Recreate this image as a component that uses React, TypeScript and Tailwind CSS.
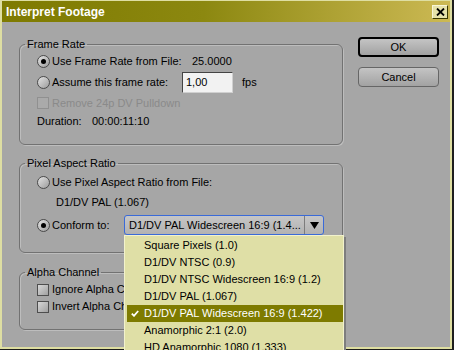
import React from "react";

const items = [
  "Square Pixels (1.0)",
  "D1/DV NTSC (0.9)",
  "D1/DV NTSC Widescreen 16:9 (1.2)",
  "D1/DV PAL (1.067)",
  "D1/DV PAL Widescreen 16:9 (1.422)",
  "Anamorphic 2:1 (2.0)",
  "HD Anamorphic 1080 (1.333)",
];
const selectedIndex = 4;

function Radio({ checked }: { checked?: boolean }) {
  return (
    <span className="w-[13px] h-[13px] shrink-0 rounded-full border border-[#4a4a4a] bg-[linear-gradient(135deg,#e4e4e4,#9c9c9c)] flex items-center justify-center">
      {checked && <span className="w-[5px] h-[5px] rounded-full bg-black" />}
    </span>
  );
}

function Checkbox({ disabled }: { disabled?: boolean }) {
  return (
    <span
      className={
        disabled
          ? "w-[12px] h-[12px] shrink-0 border border-[#909090] bg-[#aaaaaa]"
          : "w-[12px] h-[12px] shrink-0 border border-[#4e4e4e] bg-[linear-gradient(135deg,#d8d8d8,#a0a0a0)]"
      }
    />
  );
}

function Group({ title, className, children }: { title: string; className?: string; children: React.ReactNode }) {
  return (
    <fieldset
      className={
        "border border-[#727272] rounded-[6px] shadow-[inset_1px_1px_0_#bdbdbd,1px_1px_0_#bdbdbd] " +
        (className ?? "")
      }
    >
      <legend className="ml-[5px] px-[2px] leading-[14px] h-[14px]">{title}</legend>
      <div className="pl-[17px]">{children}</div>
    </fieldset>
  );
}

function Button({ label, primary }: { label: string; primary?: boolean }) {
  return (
    <button
      className={
        "w-[81px] h-[20px] rounded-[4px] flex items-center justify-center text-black bg-[linear-gradient(#c4c4c4,#a2a2a2)] " +
        (primary ? "border-2 border-black" : "border border-[#666666]")
      }
    >
      {label}
    </button>
  );
}

export default function App() {
  return (
    <div className="w-[454px] h-[350px] overflow-hidden bg-[#1e1e1e] pr-[2px] pb-[1px] font-['Liberation_Sans',Arial,sans-serif] text-[11px] text-black select-none">
      <div className="h-full flex flex-col border-l-[2px] border-t border-r-[2px] border-b-[2px] border-[#dedea2] bg-[#a6a6a6]">
        {/* title bar */}
        <div className="h-[21px] shrink-0 flex items-center pl-[4px] pr-[2px] bg-[linear-gradient(to_right,#7e7a00,#8c8810_45%,#ccb954)]">
          <span className="text-white font-bold text-[12px]">Interpret Footage</span>
          <button className="ml-auto w-[16px] h-[14px] flex items-center justify-center bg-[#e6e2aa] border border-t-[#f8f6d8] border-l-[#f8f6d8] border-r-[#3a3800] border-b-[#3a3800]">
            <svg width="9" height="8" viewBox="0 0 9 8">
              <path d="M1 0.5 L8 7.5 M8 0.5 L1 7.5" stroke="#000" strokeWidth="1.8" />
            </svg>
          </button>
        </div>

        {/* body */}
        <div className="flex-1 flex pl-[17px] pt-[15px] gap-[15px]">
          <div className="w-[324px] shrink-0 flex flex-col">
            <Group title="Frame Rate" className="pb-[18px]">
              <div className="h-[21px] grid grid-cols-[155px_auto] items-center">
                <span className="flex items-center gap-[2px]">
                  <Radio checked />
                  <span>Use Frame Rate from File:</span>
                </span>
                <span>25.0000</span>
              </div>
              <div className="h-[21px] grid grid-cols-[145px_51px_auto] items-center">
                <span className="flex items-center gap-[2px]">
                  <Radio />
                  <span>Assume this frame rate:</span>
                </span>
                <span className="h-[21px] flex items-center pl-[3px] bg-[#f2f2f2] border border-t-[#444444] border-l-[#444444] border-r-[#d0d0d0] border-b-[#d0d0d0]">
                  1,00
                </span>
                <span className="pl-[9px]">fps</span>
              </div>
              <div className="h-[20px] flex items-center gap-[3px] text-[#8a8a8a]">
                <Checkbox disabled />
                <span>Remove 24p DV Pulldown</span>
              </div>
              <div className="h-[13px] grid grid-cols-[55px_auto] items-center">
                <span>Duration:</span>
                <span>00:00:11:10</span>
              </div>
            </Group>

            <Group title="Pixel Aspect Ratio" className="mt-[11px] pb-[17px]">
              <div className="h-[24px] flex items-center gap-[2px]">
                <Radio />
                <span>Use Pixel Aspect Ratio from File:</span>
              </div>
              <div className="h-[16px] flex items-center pl-[19px]">D1/DV PAL (1.067)</div>
              <div className="mt-[5px] h-[20px] grid grid-cols-[87px_200px] items-center">
                <span className="flex items-center gap-[2px]">
                  <Radio checked />
                  <span>Conform to:</span>
                </span>
                <div className="relative h-[20px]">
                  <div className="h-full flex items-stretch border border-[#3a6ad8] rounded-[3px] bg-[linear-gradient(#c6c6c6,#b2b2b2)]">
                    <span className="flex-1 flex items-center pl-[4px] whitespace-nowrap overflow-hidden">
                      D1/DV PAL Widescreen 16:9 (1.4...
                    </span>
                    <span className="w-[19px] flex items-center justify-center border-l border-[#7c7c7c]">
                      <svg width="9" height="7" viewBox="0 0 9 7">
                        <polygon points="0,0 9,0 4.5,7" fill="#000" />
                      </svg>
                    </span>
                  </div>

                  {/* open dropdown list */}
                  <div className="absolute left-0 top-full z-10 w-[220px] pl-[2px] pt-[1px] bg-[#dfdfa6] border border-[#f2f2cc] shadow-[2px_2px_0_#7e7e7e]">
                    {items.map((item, i) => (
                      <div
                        key={item}
                        className={
                          i === selectedIndex
                            ? "h-[17px] flex items-center bg-[#7e7b00] text-white whitespace-nowrap"
                            : "h-[17px] flex items-center text-black whitespace-nowrap"
                        }
                      >
                        <span className="w-[17px] shrink-0 flex items-center pl-[4px]">
                          {i === selectedIndex && (
                            <svg width="8" height="7" viewBox="0 0 8 7">
                              <path d="M0.8 3.6 L3 5.8 L7.2 1" stroke="#fff" strokeWidth="1.8" fill="none" />
                            </svg>
                          )}
                        </span>
                        <span>{item}</span>
                      </div>
                    ))}
                  </div>
                </div>
              </div>
            </Group>

            <Group title="Alpha Channel" className="mt-[12px] pb-[14px]">
              <div className="pt-[2px]">
                <div className="h-[17px] flex items-center gap-[3px]">
                  <Checkbox />
                  <span>Ignore Alpha Channel</span>
                </div>
                <div className="h-[17px] flex items-center gap-[3px]">
                  <Checkbox />
                  <span>Invert Alpha Channel</span>
                </div>
              </div>
            </Group>
          </div>

          <div className="flex flex-col gap-[10px]">
            <Button label="OK" primary />
            <Button label="Cancel" />
          </div>
        </div>
      </div>
    </div>
  );
}
